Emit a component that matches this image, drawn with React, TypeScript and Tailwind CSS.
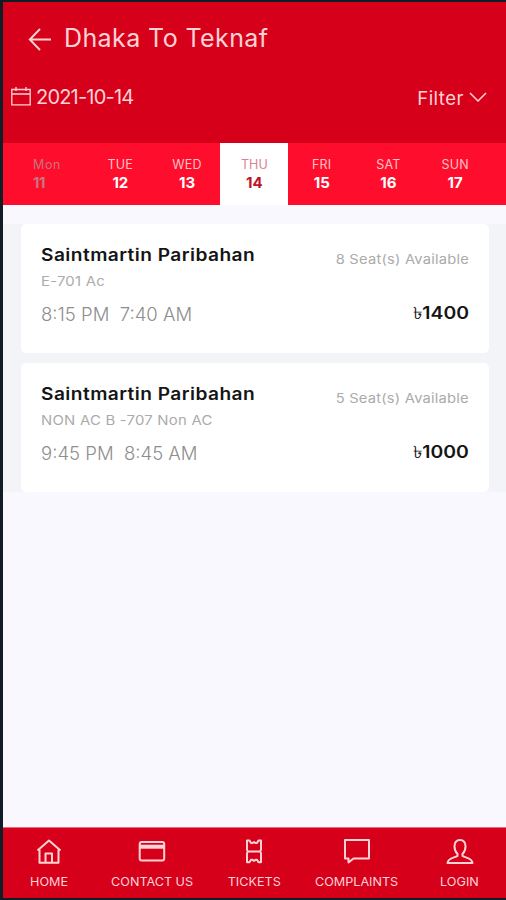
import type { ReactNode } from "react";

const days = [
  { label: "Mon", date: "11", state: "past" },
  { label: "TUE", date: "12", state: "open" },
  { label: "WED", date: "13", state: "open" },
  { label: "THU", date: "14", state: "active" },
  { label: "FRI", date: "15", state: "open" },
  { label: "SAT", date: "16", state: "open" },
  { label: "SUN", date: "17", state: "open" },
];

const trips = [
  { coach: "E-701 Ac", start: "8:15 PM", end: "7:40 AM", seats: "8 Seat(s) Available", price: "1400" },
  { coach: "NON AC B -707 Non AC", start: "9:45 PM", end: "8:45 AM", seats: "5 Seat(s) Available", price: "1000" },
];

function Icon({ children, className }: { children: ReactNode; className: string }) {
  return (
    <svg viewBox="0 0 28 28" className={className} fill="none" stroke="currentColor" strokeWidth="2" strokeLinejoin="round">
      {children}
    </svg>
  );
}

const tabs = [
  {
    label: "HOME", style: "w-[93px]",
    icon: (<><path d="M2.500 12.500 14 2.500l11.500 10" /><path d="M4.500 11.500v13.300h19V11.500M10.500 24.500V15.500h6.500v9" /></>),
  },
  {
    label: "CONTACT US", style: "w-[113px]",
    icon: (<><rect x="1.700" y="4" width="24.500" height="18.500" rx="2" /><path d="M2 8.700h24" strokeWidth="4" /></>),
  },
  {
    label: "TICKETS", style: "w-[93px]",
    icon: (<path d="M7 2.500h2.500l1.500 2.500h1.500l1.500-1 1.500 1H17l1.500-2.500H21V12l-1 1.500 1 1.500v9.300h-2.500L17 21.800h-1.500l-1.500 1-1.500-1H11L9.500 24.300H7V15l1-1.500L7 12zM8 13.500h12" />),
  },
  {
    label: "COMPLAINTS", style: "w-[113px]",
    icon: (<path d="M2 2h24v18.500H10.500L5.500 24.500v-4H2z" />),
  },
  {
    label: "LOGIN", style: "w-[93px]",
    icon: (<path d="M14 2c-4 0-5.500 2.500-5.500 6.500 0 3.500 1 5.500 3 7.500v2C8 20 2 20 1.500 25h25c-.5-5-6.500-5-10-7v-2c2-2 3-4 3-7.500C19.500 4.500 18 2 14 2z" />),
  },
];

export default function App() {
  return (
    <div className="flex h-[900px] w-[506px] flex-col overflow-hidden border-y-2 border-l-[3px] border-[#101d24] bg-[#f8f8fe] font-['Inter','Liberation_Sans',sans-serif] whitespace-nowrap">
      <header className="h-[141px] shrink-0 bg-[#d7001b] text-[#ffd3d5]">
        <div className="flex h-[73px] items-center pl-[25px]">
          <svg viewBox="0 0 24 24" className="h-6 w-6 shrink-0" fill="none" stroke="currentColor" strokeWidth="1.9">
            <path d="M23 12.500H2M12 2 1.800 12.500 12 23" />
          </svg>
          <h1 className="ml-[12px] text-[25px] leading-none font-normal tracking-[0.4px]">Dhaka To Teknaf</h1>
        </div>
        <div className="flex h-[44px] items-center justify-between pr-[19px] pl-[8px]">
          <div className="flex items-center">
            <svg viewBox="0 0 20 20" className="h-5 w-5" fill="none" stroke="currentColor" strokeWidth="1.3">
              <path d="M.8 2.500h18.400v15.300H.8zM.8 7h18.400M5 0v4M15 0v4" />
            </svg>
            <span className="ml-[5px] text-[20px] leading-none tracking-[-0.8px]">2021-10-14</span>
          </div>
          <div className="flex items-center">
            <span className="mt-[2px] text-[18.500px] leading-none tracking-[0.5px]">Filter</span>
            <svg viewBox="0 0 18 10" className="ml-[5px] h-[10px] w-[18px]" fill="none" stroke="currentColor" strokeWidth="1.5">
              <path d="M1 1l8 8 8-8" />
            </svg>
          </div>
        </div>
      </header>

      <nav className="flex h-[62px] shrink-0 bg-[#ff0d2c] pl-[17px]">
        {days.map((d) =>
          d.state === "active" ? (
            <div key={d.date} className="w-[68px] shrink-0 bg-white pt-[16px] text-center text-[#bd1228]">
              <div className="text-[12.500px] leading-3 font-normal text-[#d98390]">{d.label}</div>
              <div className="mt-[5px] text-[15px] leading-[14px] font-bold">{d.date}</div>
            </div>
          ) : d.state === "past" ? (
            <div key={d.date} className="w-[67px] shrink-0 pt-[16px] pl-[13px] text-[#c9747f]">
              <div className="text-[12.500px] leading-3 font-normal tracking-[0.6px]">{d.label}</div>
              <div className="mt-[5px] text-[15px] leading-[14px] font-bold tracking-[-0.5px]">{d.date}</div>
            </div>
          ) : (
            <div key={d.date} className="w-[66.700px] shrink-0 pt-[16px] text-center text-white">
              <div className="text-[12.500px] leading-3 font-normal tracking-[0.2px] text-[#ffc2c8]">{d.label}</div>
              <div className="mt-[5px] text-[15px] leading-[14px] font-bold">{d.date}</div>
            </div>
          ),
        )}
      </nav>

      <main className="flex-1 pt-[19px]">
        <div className="flex flex-col gap-[10px] bg-[#f3f4f8] pr-[17px] pl-[18px]">
          {trips.map((t) => (
            <article key={t.coach} className="flex h-[129px] justify-between rounded-[5px] bg-white px-5 text-[#ababab]">
              <div>
                <h2 className="mt-[21px] origin-left scale-x-[1.125] text-[17px] leading-5 font-semibold tracking-[0.4px] text-[#151515]">Saintmartin Paribahan</h2>
                <div className="mt-[8px] origin-left scale-x-[1.145] text-[13px] leading-4 font-normal tracking-[0.2px]">{t.coach}</div>
                <div className="mt-[16px] flex origin-left scale-x-[1.03] gap-[10px] text-[18px] leading-5 font-light text-[#8e8e8e]">
                  <span>{t.start}</span>
                  <span>{t.end}</span>
                </div>
              </div>
              <div className="text-right">
                <div className="mt-[27px] origin-right scale-x-[1.13] text-[13px] leading-4 font-normal tracking-[0.2px]">{t.seats}</div>
                <div className="mt-[36px] origin-right scale-x-[1.14] text-[17px] leading-5 font-semibold text-[#151515]">
                  <span className="font-normal">৳</span>{t.price}
                </div>
              </div>
            </article>
          ))}
        </div>
      </main>

      <footer className="flex h-[71px] shrink-0 justify-between border-t border-[#ec6b7a] bg-[#d7001b] text-[#ffd3d5]">
        {tabs.map((t) => (
          <div key={t.label} className={`flex flex-col items-center pt-[10px] ${t.style}`}>
            <Icon className="h-7 w-7">{t.icon}</Icon>
            <span className="mt-[10px] scale-x-[1.05] text-[12px] leading-3">{t.label}</span>
          </div>
        ))}
      </footer>
    </div>
  );
}
